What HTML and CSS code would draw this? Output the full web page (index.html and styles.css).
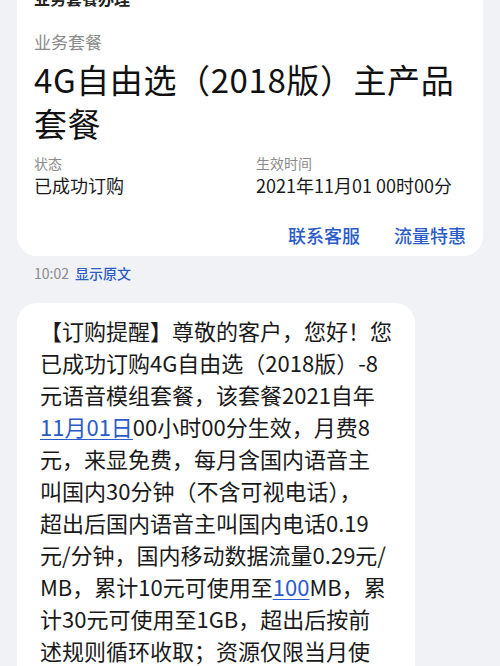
FILE: index.html
```
<!DOCTYPE html>
<html lang="zh-CN">
<head>
<meta charset="utf-8">
<title>业务套餐办理</title>
<link rel="stylesheet" href="styles.css">
</head>
<body>
<div class="card plan">
  <div class="plan-head">业务套餐办理</div>
  <div class="plan-label">业务套餐</div>
  <div class="plan-title">4G自由选（2018版）主产品<br>套餐</div>
  <div class="info">
    <div class="info-item">
      <div class="info-label">状态</div>
      <div class="info-value">已成功订购</div>
    </div>
    <div class="info-item">
      <div class="info-label">生效时间</div>
      <div class="info-value time">2021年11月01 00时00分</div>
    </div>
  </div>
  <div class="actions">
    <span class="action">联系客服</span>
    <span class="action">流量特惠</span>
  </div>
</div>
<div class="meta">
  <span class="meta-time">10:02</span>
  <span class="meta-link">显示原文</span>
</div>
<div class="card msg">
  <p class="msg-text">【订购提醒】尊敬的客户，您好！您<br>已成功订购4G自由选（2018版）-8<br>元语音模组套餐，该套餐2021自年<br><span class="link">11月01日</span>00小时00分生效，月费8<br>元，来显免费，每月含国内语音主<br>叫国内30分钟（不含可视电话），<br>超出后国内语音主叫国内电话0.19<br>元/分钟，国内移动数据流量0.29元/<br>MB，累计10元可使用至<span class="link">100</span>MB，累<br>计30元可使用至1GB，超出后按前<br>述规则循环收取；资源仅限当月使</p>
</div>
</body>
</html>
```
FILE: styles.css
```
html, body {
  margin: 0;
  padding: 0;
}
body {
  background: #f1f2f6;
  font-family: "Noto Sans CJK SC", "Noto Sans", sans-serif;
  color: #1a1a1a;
  width: 500px;
  height: 666px;
  overflow: hidden;
}
.card {
  background: #ffffff;
  border-radius: 20px;
  margin: 0 17px;
}
.plan {
  margin-top: -30px;
  padding: 17px 17px 9px 17px;
}
.plan-head {
  font-size: 16px;
  line-height: 22px;
  font-weight: 700;
  color: #222;
}
.plan-label {
  margin-top: 21px;
  font-size: 17px;
  line-height: 24px;
  color: #8a8a8a;
}
.plan-title {
  margin-top: 3px;
  font-size: 33px;
  line-height: 44px;
  letter-spacing: 0.6px;
  color: #111;
}
.info {
  margin-top: 8px;
  display: grid;
  grid-template-columns: 222px 1fr;
}
.info-label {
  font-size: 14px;
  line-height: 20px;
  color: #8a8a8a;
}
.info-value {
  font-size: 18px;
  line-height: 24px;
  color: #1a1a1a;
}
.actions {
  margin-top: 26px;
  display: flex;
  justify-content: flex-end;
  gap: 34px;
}
.action {
  font-size: 18px;
  line-height: 24px;
  color: #2a5bc9;
  font-weight: 500;
}
.meta {
  margin: 7px 34px 0 34px;
  display: flex;
  gap: 6px;
  font-size: 14px;
  line-height: 20px;
}
.meta-time {
  color: #8a8a8a;
}
.meta-link {
  color: #2a5bc9;
  font-weight: 500;
}
.msg {
  margin-top: 20px;
  width: 398px;
  padding: 11px 0 20px 23px;
  box-sizing: border-box;
}
.msg-text {
  margin: 0;
  font-size: 22px;
  line-height: 32px;
  white-space: nowrap;
  color: #1a1a1a;
}
.link {
  color: #2a5bc9;
  text-decoration: underline;
  text-underline-offset: 3px;
  text-decoration-thickness: 1px;
}
```
